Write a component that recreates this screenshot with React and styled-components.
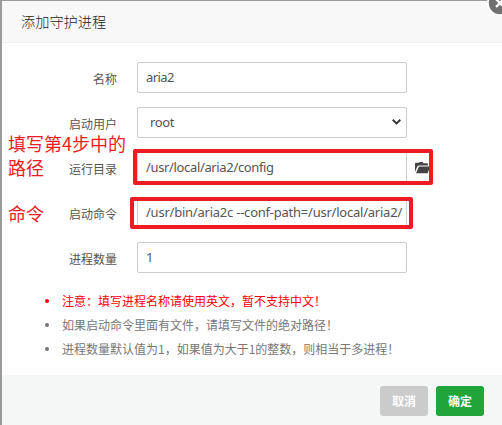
import React from "react";
import styled, { createGlobalStyle } from "styled-components";

const Global = createGlobalStyle`
  * { box-sizing: border-box; }
  body { margin: 0; overflow: hidden; background: #9b9b9b; }
`;

const Page = styled.div`
  position: relative;
  width: 502px;
  height: 425px;
  padding: 1px 0 0 2px;
  overflow: hidden;
  background: #9b9b9b;
  font-family: "Noto Sans", "Noto Sans CJK SC", sans-serif;
  font-size: 12px;
  color: #555;
`;
const Dialog = styled.div`
  display: flex;
  flex-direction: column;
  height: 424px;
  background: #fff;
`;
const Header = styled.header`
  height: 42px;
  padding-left: 19px;
  line-height: 41px;
  font-size: 14.2px;
  color: #222;
  background: #f8f8f8;
  border-bottom: 1px solid #eee;
  font-family: "Noto Sans CJK SC", sans-serif;
  font-weight: 300;
`;
const Form = styled.div`
  display: flex;
  flex-direction: column;
  gap: 14px;
  padding-top: 19px;
`;
const Row = styled.div`
  display: flex;
  align-items: center;
  height: 31px;
`;
const Label = styled.label`
  width: 115px;
  margin-right: 20px;
  text-align: right;
  line-height: 31px;
  padding-top: 1px;
  color: #555;
  font-family: "Noto Sans CJK SC", sans-serif;
  font-weight: 400;
`;
const Field = styled.div`
  display: flex;
  align-items: center;
  justify-content: space-between;
  width: 270px;
  height: 31px;
  padding: 0 4px 1px ${(p) => p.$indent || 8}px;
  border: 1px solid #ccc;
  border-radius: 2px;
  white-space: nowrap;
  font-size: 13px;
  letter-spacing: ${(p) => p.$spacing ?? -0.35}px;
  svg { margin-right: 1px; }
`;
const FolderIcon = styled.svg`
  margin-left: 8px;
`;
const Notes = styled.ul`
  margin: 15px 0 0;
  padding: 0 0 0 43px;
  list-style: none;
  font-family: "Noto Sans CJK SC", sans-serif;
  font-weight: 400;
`;
const Note = styled.li`
  display: flex;
  align-items: center;
  height: 24px;
  white-space: nowrap;
  color: ${(p) => (p.$warn ? "#f00" : "#777")};
  &::before {
    content: "";
    width: 4px;
    height: 4px;
    margin: 2px 13px 0 0;
    border-radius: 50%;
    background: currentColor;
  }
`;
const Footer = styled.footer`
  display: flex;
  justify-content: flex-end;
  gap: 8px;
  height: 50px;
  margin-top: auto;
  padding: 11px 18px 0 0;
  background: #f5f7f7;
`;
const Button = styled.button`
  width: 48px;
  height: 30px;
  padding: 0 0 2px;
  border: 0;
  border-radius: 3px;
  color: #fff;
  background: ${(p) => (p.$primary ? "#20a53a" : "#cbcbcb")};
  font: 700 12px "Noto Sans CJK SC", sans-serif;
`;
const Close = styled.svg`
  position: absolute;
  left: 486px;
  top: -11px;
`;
const Highlight = styled.div`
  position: absolute;
  left: ${(p) => p.$x}px;
  top: ${(p) => p.$y}px;
  width: ${(p) => p.$w}px;
  height: ${(p) => p.$h}px;
  border: 4px solid #ed1c24;
  border-radius: 2px;
`;
const Callout = styled.div`
  position: absolute;
  left: 8px;
  top: ${(p) => p.$y}px;
  color: #ed1c24;
  font: 400 18px/24px "Noto Sans CJK SC", sans-serif;
  white-space: nowrap;
`;

export default function App() {
  return (
    <Page>
      <Global />
      <Dialog>
        <Header>添加守护进程</Header>
        <Form>
          <Row><Label>名称</Label><Field $spacing={-0.6}>aria2</Field></Row>
          <Row>
            <Label>启动用户</Label>
            <Field $indent={12} $spacing={-0.4}>
              root
              <svg width="9" height="6" viewBox="0 0 9 6" fill="none" stroke="#333" strokeWidth="1.9">
                <path d="M.7 .8 4.5 4.4 8.3 .8" />
              </svg>
            </Field>
          </Row>
          <Row>
            <Label>运行目录</Label>
            <Field>/usr/local/aria2/config</Field>
            <FolderIcon width="15" height="12" viewBox="0 0 15 12" fill="#444">
              <path d="M0 10V1.8Q0 .8 1 .8H4L5 0H7.5L8.5 1.3H12Q13 1.3 13 2.3V3.6H4Q2.8 3.6 2.2 4.8Z" />
              <path d="M4 4.6H15L12.7 11.2H1Z" />
            </FolderIcon>
          </Row>
          <Row><Label>启动命令</Label><Field $spacing={-0.23}>/usr/bin/aria2c --conf-path=/usr/local/aria2/</Field></Row>
          <Row><Label>进程数量</Label><Field>1</Field></Row>
        </Form>
        <Notes>
          <Note $warn>注意：填写进程名称请使用英文，暂不支持中文！</Note>
          <Note>如果启动命令里面有文件，请填写文件的绝对路径！</Note>
          <Note>进程数量默认值为1，如果值为大于1的整数，则相当于多进程！</Note>
        </Notes>
        <Footer>
          <Button>取消</Button>
          <Button $primary>确定</Button>
        </Footer>
      </Dialog>
      <Close width="28" height="28" viewBox="0 0 28 28">
        <circle cx="14" cy="14" r="13" fill="#fff" />
        <circle cx="14" cy="14" r="11.2" fill="#707070" />
        <path d="M10 10 18 18M18 10 10 18" stroke="#fff" strokeWidth="2.4" />
      </Close>
      <Highlight $x={133} $y={149} $w={300} $h={36} />
      <Highlight $x={130} $y={197} $w={283} $h={32} />
      <Callout $y={131}>填写第4步中的<br />路径</Callout>
      <Callout $y={201}>命令</Callout>
    </Page>
  );
}
